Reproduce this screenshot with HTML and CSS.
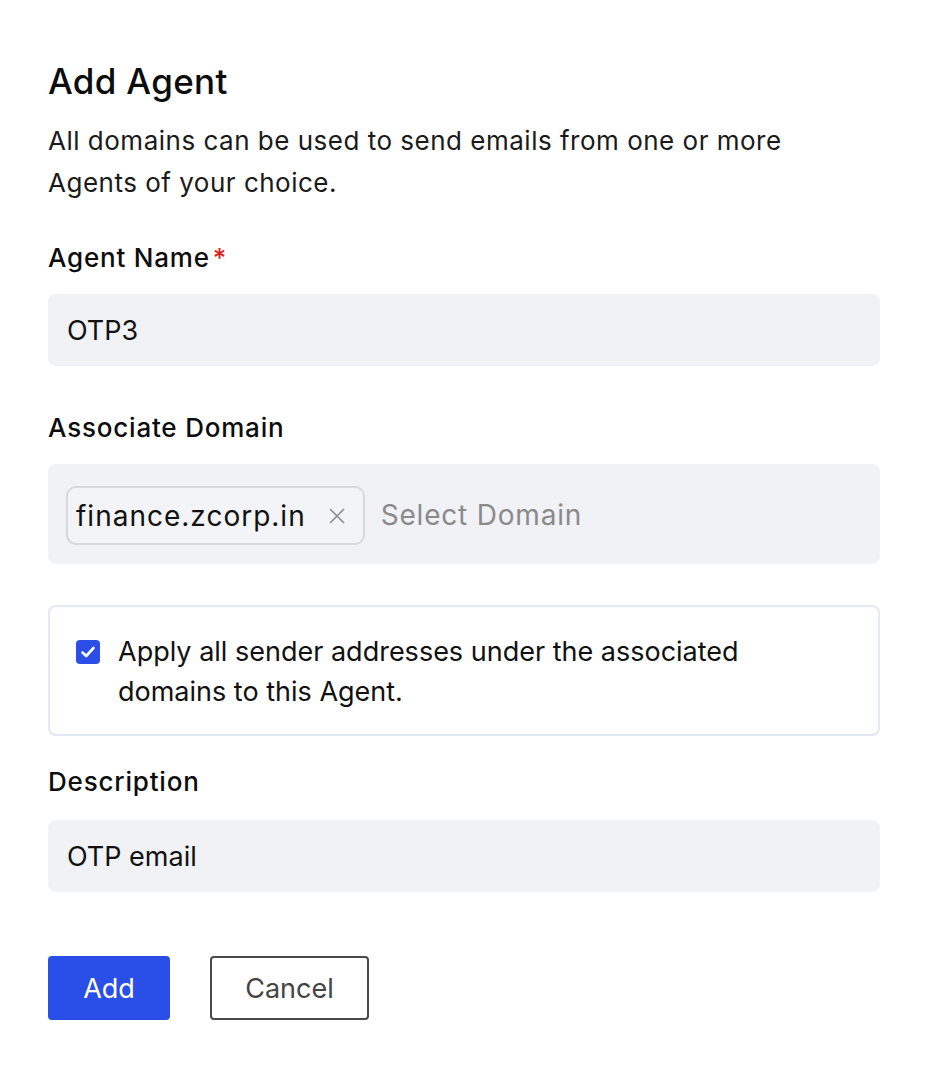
FILE: index.html
```html
<!DOCTYPE html>
<html lang="en">
<head>
    <meta charset="UTF-8">
    <meta name="viewport" content="width=device-width, initial-scale=1.0">
    <title>Add Agent</title>
    <link rel="stylesheet" href="styles.css">
</head>
<body>
    <div class="panel">
        <h1 class="title">Add Agent</h1>
        <p class="intro">All domains can be used to send emails from one or more<br>Agents of your choice.</p>

        <label class="field-label label-name">Agent Name<span class="required">*</span></label>
        <div class="text-field">OTP3</div>

        <label class="field-label label-domain">Associate Domain</label>
        <div class="domain-field">
            <span class="chip">finance.zcorp.in
                <svg class="chip-close" width="18" height="18" viewBox="0 0 18 18"><path d="M2 2 L16 16 M16 2 L2 16" stroke="#8c8c8c" stroke-width="1.6" fill="none"/></svg>
            </span>
            <span class="placeholder">Select Domain</span>
        </div>

        <div class="check-card">
            <span class="checkbox">
                <svg width="24" height="24" viewBox="0 0 24 24"><path d="M6.5 12.5 L10.2 16 L17.5 8" stroke="#fff" stroke-width="2.6" fill="none" stroke-linecap="round" stroke-linejoin="round"/></svg>
            </span>
            <span class="check-text">Apply all sender addresses under the associated<br>domains to this Agent.</span>
        </div>

        <label class="field-label label-desc">Description</label>
        <div class="text-field">OTP email</div>

        <div class="actions">
            <button class="btn btn-primary">Add</button>
            <button class="btn btn-secondary">Cancel</button>
        </div>
    </div>
</body>
</html>
```

FILE: styles.css
```css
body {
    margin: 0;
    background-color: #ffffff;
    font-family: Inter, "Noto Sans", sans-serif;
    color: #111111;
}
.panel {
    width: 832px;
    padding: 61px 0 0 48px;
    display: flex;
    flex-direction: column;
}
.title {
    margin: 0;
    font-size: 35px;
    letter-spacing: 0.3px;
    font-weight: 500;
    line-height: 40px;
    color: #0d0d0d;
}
.intro {
    margin: 19px 0 0 0;
    font-size: 26px;
    letter-spacing: 0.5px;
    line-height: 42px;
    color: #1a1a1a;
}
.field-label {
    display: block;
    font-size: 26px;
    letter-spacing: 0.8px;
    font-weight: 500;
    line-height: 32px;
    color: #0d0d0d;
}
.label-name {
    margin-top: 38px;
}
.label-domain {
    margin-top: 46px;
}
.label-desc {
    margin-top: 30px;
}
.required {
    color: #e0201b;
    margin-left: 3px;
}
.text-field {
    margin-top: 20px;
    height: 72px;
    box-sizing: border-box;
    padding: 0 19px;
    display: flex;
    align-items: center;
    background-color: #f1f2f6;
    border-radius: 8px;
    font-size: 27px;
    color: #111111;
}
.label-desc + .text-field {
    margin-top: 22px;
}
.domain-field {
    margin-top: 20px;
    height: 100px;
    box-sizing: border-box;
    padding: 2px 18px 0 18px;
    display: flex;
    align-items: center;
    gap: 16px;
    background-color: #f1f2f6;
    border-radius: 8px;
}
.chip {
    height: 59px;
    box-sizing: border-box;
    display: flex;
    align-items: center;
    gap: 22px;
    padding: 2px 17px 0 8px;
    border: 2px solid #d8d9dd;
    border-radius: 10px;
    background-color: #f3f4f7;
    font-size: 28px;
    letter-spacing: 1px;
    color: #111111;
}
.placeholder {
    font-size: 28px;
    letter-spacing: 0.8px;
    color: #8a8a8a;
}
.check-card {
    margin-top: 41px;
    height: 131px;
    box-sizing: border-box;
    padding: 25px 20px 0 26px;
    display: flex;
    align-items: flex-start;
    gap: 18px;
    border: 2px solid #e3e8f5;
    border-radius: 8px;
}
.checkbox {
    margin-top: 8px;
    width: 24px;
    height: 24px;
    flex: none;
    background-color: #2b4fe6;
    border-radius: 4px;
    display: flex;
}
.check-text {
    font-size: 27px;
    line-height: 40px;
    color: #111111;
}
.actions {
    margin-top: 64px;
    display: flex;
    gap: 40px;
}
.btn {
    height: 64px;
    box-sizing: border-box;
    border-radius: 4px;
    font-family: Inter, "Noto Sans", sans-serif;
    font-size: 27px;
    cursor: pointer;
}
.btn-primary {
    width: 122px;
    border: none;
    background-color: #2a4fe8;
    color: #ffffff;
}
.btn-secondary {
    width: 159px;
    border: 2px solid #4a4a4a;
    background-color: #ffffff;
    color: #444444;
}
```
